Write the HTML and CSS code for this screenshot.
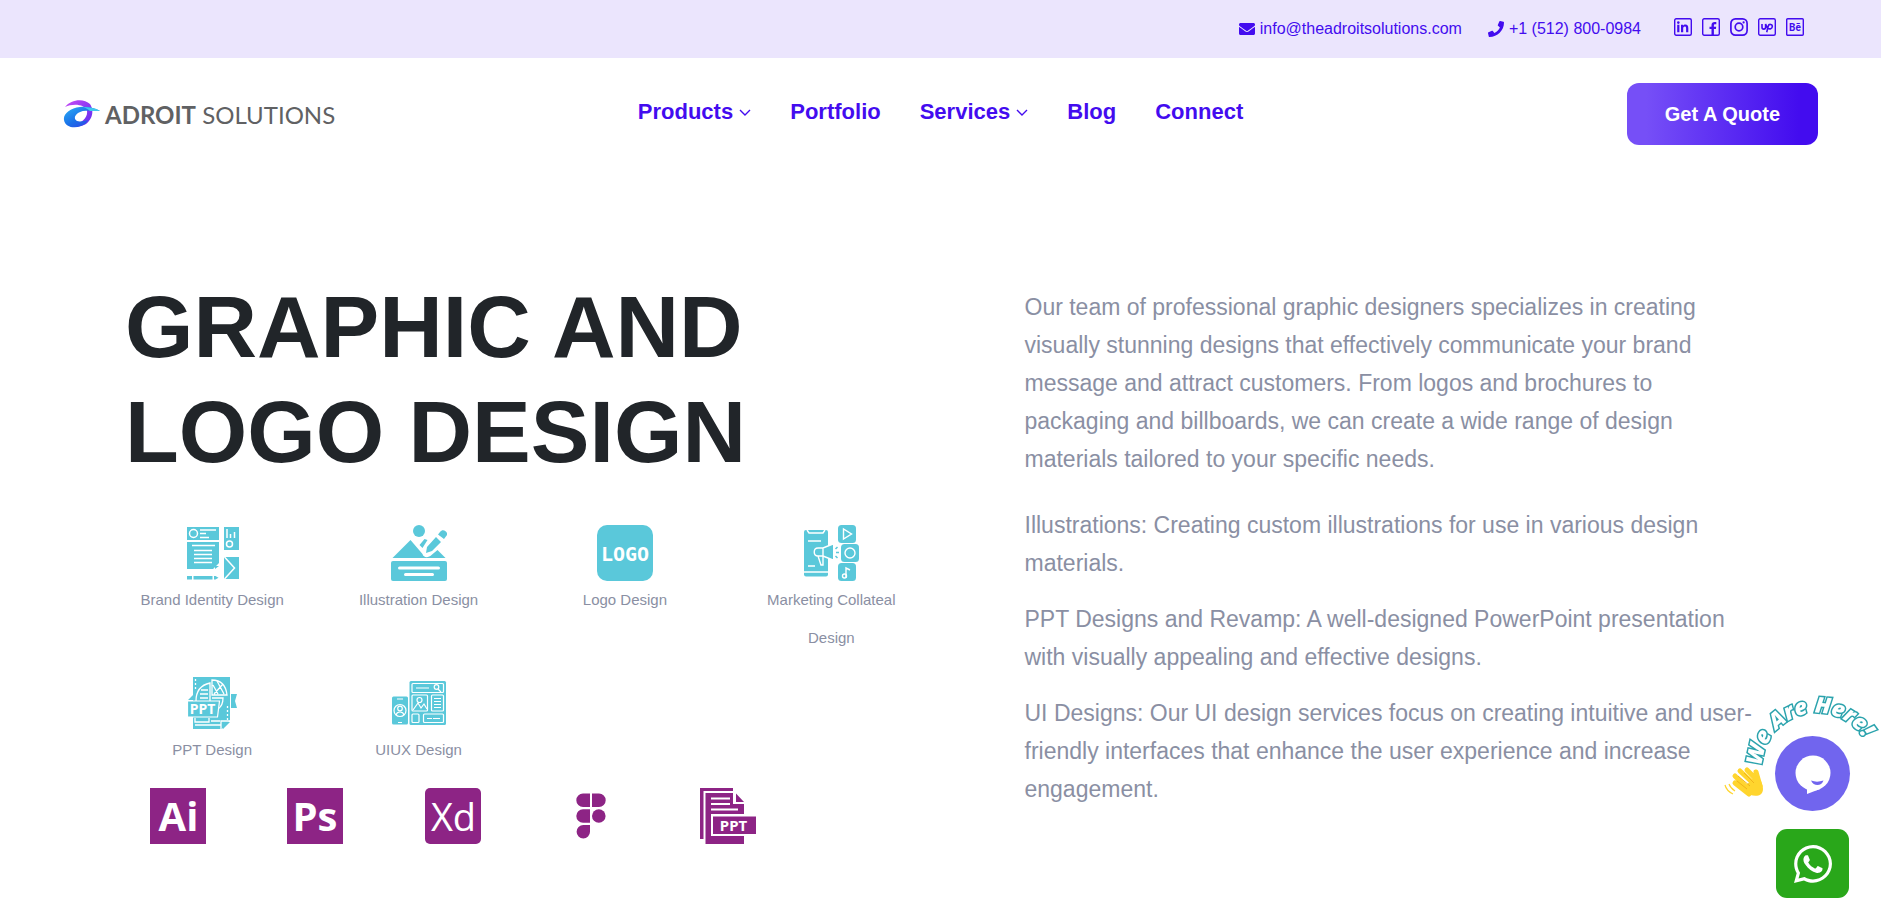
FILE: index.html
```html
<!DOCTYPE html>
<html lang="en">
<head>
    <meta charset="UTF-8">
    <meta name="viewport" content="width=device-width, initial-scale=1">
    <title>Graphic and Logo Design | Adroit Solutions</title>
    <link rel="stylesheet" href="styles.css">
</head>
<body>
    <!-- top bar -->
    <div class="topbar">
        <a class="contact" href="mailto:info@theadroitsolutions.com">
            <svg width="16" height="16" viewBox="0 0 512 512" fill="currentColor"><path d="M502.3 190.8c3.9-3.1 9.7-.2 9.7 4.7V400c0 26.5-21.5 48-48 48H48c-26.5 0-48-21.5-48-48V195.6c0-5 5.7-7.8 9.7-4.7 22.4 17.4 52.1 39.5 154.1 113.6 21.1 15.4 56.7 47.8 92.2 47.6 35.7.3 72-32.8 92.3-47.6 102-74.1 131.6-96.3 154-113.7zM256 320c23.2.4 56.6-29.2 73.4-41.4 132.7-96.3 142.8-104.7 173.4-128.7 5.8-4.5 9.2-11.5 9.2-18.9v-19c0-26.5-21.5-48-48-48H48c-26.5 0-48 21.5-48 48v19c0 7.4 3.4 14.3 9.2 18.9 30.6 23.9 40.7 32.4 173.4 128.7 16.8 12.2 50.2 41.8 73.4 41.4z"/></svg>
            info@theadroitsolutions.com
        </a>
        <a class="contact" href="tel:+15128000984">
            <svg width="16" height="16" viewBox="0 0 512 512" fill="currentColor"><path d="M493.4 24.6l-104-24c-11.3-2.6-22.9 3.3-27.5 13.9l-48 112c-4.2 9.8-1.4 21.3 6.9 28l60.6 49.6c-36 76.7-98.9 140.5-177.2 177.2l-49.6-60.6c-6.8-8.3-18.2-11.1-28-6.9l-112 48C3.9 366.5-2 378.1.6 389.4l24 104C27.1 504.2 36.7 512 48 512c256.1 0 464-207.5 464-464 0-11.2-7.7-20.9-18.6-23.4z"/></svg>
            +1 (512) 800-0984
        </a>
        <div class="social">
            <a href="#" aria-label="LinkedIn">
                <svg width="18" height="18" viewBox="0 0 18 18"><rect x="0.7" y="0.7" width="16.6" height="16.6" rx="1.5" fill="none" stroke="currentColor" stroke-width="1.4"/><g fill="currentColor"><circle cx="4.3" cy="4.6" r="1.3"/><path d="M3.2 6.8h2.200v7.4H3.200zM7 6.800h2.100v1c.5-.8 1.200-1.200 2.300-1.200 2.100 0 2.900 1.300 2.900 3.400v4.200h-2.200v-3.900c0-1.200-.4-1.800-1.300-1.800-1.100 0-1.600.8-1.600 1.900v3.800H7z"/></g></svg>
            </a>
            <a href="#" aria-label="Facebook">
                <svg width="18" height="18" viewBox="0 0 18 18"><rect x="0.7" y="0.7" width="16.6" height="16.6" rx="1.5" fill="none" stroke="currentColor" stroke-width="1.4"/><path d="M9.500 17V11H7.500V8.800h2V7.200c0-2 1.200-3.200 3.100-3.200h1.700v2.200h-1.200c-.9 0-1.200.4-1.200 1.200v1.400h2.300L13.900 11h-2v6z" fill="currentColor"/></svg>
            </a>
            <a href="#" aria-label="Instagram">
                <svg width="18" height="18" viewBox="0 0 18 18"><rect x="0.9" y="0.9" width="16.200" height="16.200" rx="4.500" fill="none" stroke="currentColor" stroke-width="1.700"/><circle cx="9" cy="9" r="3.800" fill="none" stroke="currentColor" stroke-width="1.700"/><circle cx="13.600" cy="4.400" r="1.100" fill="currentColor"/></svg>
            </a>
            <a href="#" aria-label="Upwork">
                <svg width="18" height="18" viewBox="0 0 18 18"><rect x="0.7" y="0.7" width="16.6" height="16.6" rx="1.500" fill="none" stroke="currentColor" stroke-width="1.4"/><path d="M4 6v3.200c0 2.600 3.600 2.600 3.600 0V6c.6 2.200 1.500 3.700 2.700 4.800M8.700 14.200l1.500-6c.6-2.600 4.200-2.200 4.100.3-.1 2.400-2.600 2.900-4.200 1.900" fill="none" stroke="currentColor" stroke-width="1.600"/></svg>
            </a>
            <a href="#" aria-label="Behance">
                <svg width="18" height="18" viewBox="0 0 18 18"><rect x="0.7" y="0.7" width="16.6" height="16.6" rx="1" fill="none" stroke="currentColor" stroke-width="1.4"/><text x="9" y="12.500" text-anchor="middle" class="be">Bē</text></svg>
            </a>
        </div>
    </div>

    <!-- header -->
    <header class="header">
        <a class="logo" href="#">
            <svg width="38" height="28" viewBox="0 0 38 28">
                <defs>
                    <linearGradient id="markPurple" x1="0" y1="0" x2="1" y2="1"><stop offset="0" stop-color="#c94bf5"/><stop offset="1" stop-color="#5a2af0"/></linearGradient>
                    <linearGradient id="markBlue" x1="0" y1="0" x2="1" y2="1"><stop offset="0" stop-color="#2bb0f5"/><stop offset="0.500" stop-color="#1a6fe8"/><stop offset="1" stop-color="#3a2fe8"/></linearGradient>
                </defs>
                <path d="M2 7C8-1 21-2 27 4c4 6 3 15-4 20-5 3-10 3-13 1 9-1 15-8 14-14C22 4 10 3 2 7z" fill="url(#markPurple)"/>
                <path d="M37 11c-5-3-13-5-20-4C7 8 0 14 1 20c1 7 10 9 17 6 3-1 6-3 7-6-4 1-8 2-11 1-3-2-3-5 1-8 4-3 11-3 22-2z" fill="url(#markBlue)"/>
                <path d="M37 11c-4-3-11-4-17-4 3 1 5 2 7 4z" fill="#40c8ee"/>
            </svg>
            <span class="logo-text"><b>ADROIT</b> SOLUTIONS</span>
        </a>
        <nav class="nav">
            <a href="#">Products <svg width="12" height="8" viewBox="0 0 12 8"><path d="M1 1l5 5 5-5"/></svg></a>
            <a href="#">Portfolio</a>
            <a href="#">Services <svg width="12" height="8" viewBox="0 0 12 8"><path d="M1 1l5 5 5-5"/></svg></a>
            <a href="#">Blog</a>
            <a href="#">Connect</a>
        </nav>
        <button class="quote" type="button">Get A Quote</button>
    </header>

    <!-- service section -->
    <main class="service">
        <section class="service-left">
            <h1>GRAPHIC AND LOGO DESIGN</h1>
            <div class="types">
                <div class="type">
                    <svg width="56" height="56" viewBox="0 0 56 56">
                        <path fill="#5ac8da" d="M3 2h32v13H3zM3 17h32v21l-6 6H3zM40 2h15v23H40zM40 32h15v22H40zM3 51h5v3.500H3zM9.500 51h19v3.500h-19zM30 51h1.500l3 1.700-3 1.800H30zM31 44v-3h4z"/>
                        <g fill="none" stroke="#fff" stroke-width="1.500">
                            <circle cx="9.500" cy="8.500" r="4"/><circle cx="45.500" cy="19" r="3"/>
                            <path d="M16 5h16M16 8.500h6M16 12.500h9M8 20.500h23M10 25.500h18M10 29.500h18M10 33.500h18M10 37.500h18M43 4v9M46.500 9v4M50.500 7v6M40.500 32l10 11-10 11"/>
                        </g>
                    </svg>
                    <p>Brand Identity Design</p>
                </div>
                <div class="type">
                    <svg width="56" height="56" viewBox="0 0 56 56">
                        <g fill="#5ac8da">
                            <circle cx="28" cy="6" r="6"/>
                            <path d="M1.500 33l18-18 12 14c1 4 6 4 9 1l6-5 8 8z"/>
                            <path d="M36 22l9-10 5 5-9 9-6 2zM47 9.500l2-2.500c3-4 8 0 7 3l-3 4zM28.500 20l5-6 3 1-5 8z"/>
                            <rect y="36" width="56" height="20" rx="2"/>
                        </g>
                        <path d="M8.500 43h39M14.500 49.500h27" stroke="#fff" stroke-width="3" stroke-linecap="round"/>
                    </svg>
                    <p>Illustration Design</p>
                </div>
                <div class="type">
                    <svg width="56" height="56" viewBox="0 0 56 56">
                        <rect width="56" height="56" rx="10" fill="#5ac8da"/>
                        <text x="28" y="36" text-anchor="middle" class="logo-word">LOGO</text>
                    </svg>
                    <p>Logo Design</p>
                </div>
                <div class="type">
                    <svg width="56" height="56" viewBox="0 0 56 56">
                        <g fill="#5ac8da">
                            <rect x="1" y="5" width="24" height="46.500" rx="2"/>
                            <path d="M20 23l10-4v16l-10-4z"/>
                            <rect x="35" width="18" height="18" rx="3.500"/>
                            <rect x="38" y="19" width="18" height="18" rx="3.500"/>
                            <rect x="35" y="38" width="18" height="18" rx="3.500"/>
                        </g>
                        <g fill="none" stroke="#fff" stroke-width="1.400">
                            <path d="M4 5l2 3h14l2-3M5 16h13M5 41h7M1 47h24M30 19l-10 4h-5c-5 0-5 8 0 8h5l10 4M20 23v17h-2l-3-9M40.500 4v10l8-5zM43 53V43l4 2"/>
                            <circle cx="47" cy="28" r="5"/><circle cx="41.500" cy="51" r="2"/>
                        </g>
                        <path d="M32.500 24l2-2M33 27.500h3M32.500 31l2 2" stroke="#5ac8da" stroke-width="1.500"/>
                    </svg>
                    <p>Marketing Collateal Design</p>
                </div>
                <div class="type">
                    <svg width="56" height="56" viewBox="0 0 56 56">
                        <path fill="#5ac8da" d="M9 2h37v43l-8 9H9zM4 25l5-5v5zM47 19h6l-2 7 2 7h-6zM39 54v-7h7z"/>
                        <g fill="none" stroke="#fff" stroke-width="1.300">
                            <path d="M12 26c0-10 5-16 14-18v19M28 5c9 0 14 6 15 15H28zM29 10l5 9M33 6l7 13M39 9l-9 10M17 15h7M16 19h8M16 23h8M28 23h11c0 5-2 9-5 11M11 43v4h14v-4M11 50h26M27 46h9M37 54v-8h9"/>
                            <path d="M11.500 4v10M43.500 31v14" stroke-dasharray="2 2"/>
                        </g>
                        <path d="M3.500 26h32l-2 16h-30z" fill="#5ac8da" stroke="#fff" stroke-width="1.200"/>
                        <text x="18.500" y="39" text-anchor="middle" class="ppt-teal">PPT</text>
                    </svg>
                    <p>PPT Design</p>
                </div>
                <div class="type">
                    <svg width="56" height="56" viewBox="0 0 56 56">
                        <g fill="#5ac8da"><rect x="1" y="21.500" width="16" height="28" rx="1.500"/><rect x="18.500" y="6" width="36.500" height="44" rx="1.500"/></g>
                        <g fill="none" stroke="#fff" stroke-width="1.200">
                            <circle cx="9" cy="35.500" r="6"/><circle cx="9" cy="33.500" r="2.300"/><path d="M5 40c1-4 7-4 8 0M6 24h6M7 47.500h4"/>
                            <rect x="21" y="8.500" width="31.500" height="9" rx="1"/><path d="M25 13h13M47 14l3 3"/><circle cx="45.500" cy="12" r="2.300"/>
                            <rect x="21" y="20" width="15.500" height="16" rx="1"/><circle cx="28.500" cy="25" r="2.500"/><path d="M22 35l5-7 3 5 3-4 3 5"/>
                            <rect x="40.500" y="20" width="12" height="16" rx="1"/><path d="M43 23.500h7M43 26.500h7M43 29.500h7M43 32.500h7"/>
                            <rect x="21" y="39" width="7" height="8.500" rx="1"/><rect x="32.500" y="39" width="20" height="8.500" rx="1"/><path d="M36 43.500h5M42 43.500h7"/>
                        </g>
                    </svg>
                    <p>UIUX Design</p>
                </div>
            </div>
            <div class="tools">
                <svg width="56" height="56" viewBox="0 0 56 56"><rect width="56" height="56" fill="#8d2485"/><text x="28.500" y="43" text-anchor="middle" class="adobe">Ai</text></svg>
                <svg width="56" height="56" viewBox="0 0 56 56"><rect width="56" height="56" fill="#8d2485"/><text x="28" y="43" text-anchor="middle" class="adobe">Ps</text></svg>
                <svg width="56" height="56" viewBox="0 0 56 56"><rect width="56" height="56" rx="5" fill="#8d2485"/><text x="28.500" y="42.500" text-anchor="middle" class="adobe thin">Xd</text></svg>
                <svg width="56" height="56" viewBox="0 0 56 56"><path fill="#8d2485" d="M27 5.500h-7a6.700 6.700 0 0 0 0 13.400h7zM29 5.500h7a6.700 6.700 0 0 1 0 13.400h-7zM27 21.300h-7a6.700 6.700 0 0 0 0 13.400h7zM27 37h-6.700a6.700 6.700 0 1 0 6.700 6.700z"/><circle cx="35.800" cy="28" r="6.800" fill="#8d2485"/></svg>
                <svg width="56" height="56" viewBox="0 0 56 56">
                    <path fill="#8d2485" d="M0 0h33v3H3.500v48H0zM5.500 5H33v11h11v10H11v22h33v8H5.500zM36 5.500l8 8.500h-8zM13 28.500h43V46H13z"/>
                    <path d="M11 10.500h19M11 16h19M11 21.500h27" stroke="#fff" stroke-width="2"/>
                    <text x="33.500" y="43" text-anchor="middle" class="ppt-purple">PPT</text>
                </svg>
            </div>
        </section>

        <section class="service-right">
            <p class="intro">Our team of professional graphic designers specializes in creating visually stunning designs that effectively communicate your brand message and attract customers. From logos and brochures to packaging and billboards, we can create a wide range of design materials tailored to your specific needs.</p>
            <p>Illustrations: Creating custom illustrations for use in various design materials.</p>
            <p>PPT Designs and Revamp: A well-designed PowerPoint presentation with visually appealing and effective designs.</p>
            <p>UI Designs: Our UI design services focus on creating intuitive and user-friendly interfaces that enhance the user experience and increase engagement.</p>
        </section>
    </main>

    <!-- floating chat buttons -->
    <div class="floating">
        <button class="chat" type="button" aria-label="Open chat">
            <svg width="75" height="75" viewBox="0 0 75 75"><circle cx="38" cy="37" r="17.500" fill="#fff"/><path d="M32 50v8l13-5z" fill="#fff"/><path d="M36 44.500c4 1.500 8 1.500 12.500 0-2 6-10 6-12.500 0z" fill="#7165ee"/></svg>
        </button>
        <svg class="greeting" width="160" height="124" viewBox="0 0 160 124">
            <defs><path id="arc" d="M41 76A55 55 0 1 1 150 88"/></defs>
            <text class="greeting-text"><textPath href="#arc">We Are Here!</textPath></text>
            <g fill="none" stroke="#ffd52e" stroke-width="5" stroke-linecap="round">
                <path d="M14 86l14 14M19 81l14 13M26 80l12 12M14 93l14 11M39 96l-4-14"/>
            </g>
            <path d="M22 98l14-13c4 5 6 10 6 14 0 8-10 9-18 3z" fill="#ffd52e"/>
            <path d="M17 86l12 10M23 83l10 10M16 91l10 8" fill="none" stroke="#f0b41c" stroke-width="1"/>
            <path d="M4 95c1 4 4 7 8 9M8 94c1 3 3 5 6 7" fill="none" stroke="#ffd52e" stroke-width="1.200"/>
        </svg>
        <a class="whatsapp" href="#" aria-label="WhatsApp">
            <svg width="38" height="38" viewBox="0 32 448 448" fill="#fff"><path d="M380.900 97.100C339 55.100 283.200 32 223.900 32c-122.400 0-222 99.600-222 222 0 39.100 10.200 77.300 29.600 111L0 480l117.700-30.900c32.400 17.700 68.900 27 106.100 27h.1c122.300 0 224.100-99.600 224.100-222 0-59.300-25.200-115-67.100-157zm-157 341.600c-33.200 0-65.700-8.900-94-25.700l-6.700-4-69.800 18.300L72 359.200l-4.400-7c-18.500-29.400-28.200-63.300-28.200-98.200 0-101.700 82.800-184.500 184.600-184.500 49.300 0 95.600 19.200 130.400 54.100 34.800 34.900 56.200 81.200 56.100 130.500 0 101.800-84.900 184.600-186.600 184.600zm101.200-138.200c-5.500-2.800-32.800-16.200-37.900-18-5.100-1.900-8.800-2.800-12.500 2.800-3.700 5.600-14.300 18-17.600 21.800-3.200 3.700-6.500 4.200-12 1.400-32.600-16.300-54-29.100-75.500-66-5.700-9.800 5.700-9.100 16.300-30.300 1.800-3.700.9-6.900-.5-9.700-1.400-2.800-12.500-30.100-17.100-41.200-4.500-10.800-9.100-9.300-12.500-9.500-3.200-.2-6.900-.2-10.600-.2-3.700 0-9.700 1.400-14.800 6.900-5.100 5.600-19.400 19-19.400 46.300 0 27.300 19.900 53.700 22.600 57.400 2.800 3.700 39.100 59.700 94.800 83.800 35.200 15.200 49 16.500 66.600 13.900 10.700-1.600 32.800-13.400 37.400-26.400 4.600-13 4.600-24.100 3.200-26.400-1.300-2.500-5-3.900-10.500-6.600z"/></svg>
        </a>
    </div>
</body>
</html>
```
FILE: styles.css
```css
* {
    box-sizing: border-box;
}

body {
    margin: 0;
    background: #fff;
    font-family: "Liberation Sans", Arial, sans-serif;
    color: #212529;
}

a {
    color: #430cef;
    text-decoration: none;
}

h1, p {
    margin: 0;
}

/* Top bar */
.topbar {
    display: flex;
    justify-content: flex-end;
    align-items: center;
    height: 58px;
    padding: 0 77px;
    background: #ebe5fd;
    font-size: 16px;
}

.contact {
    display: flex;
    align-items: center;
    gap: 5px;
    margin-right: 26px;
}

.social {
    display: flex;
    gap: 10px;
    margin-left: 7px;
    padding-bottom: 4px;
}

.social svg {
    display: block;
}

.be {
    font: bold 10px Roboto, sans-serif;
    fill: #430cef;
}

/* Header */
.header {
    display: grid;
    grid-template-columns: 1fr auto 1fr;
    align-items: center;
    padding: 25px 63px;
}

.logo {
    display: flex;
    align-items: center;
    gap: 4px;
}

.logo-text {
    font-family: Lato, sans-serif;
    font-size: 24px;
    font-weight: 400;
    color: #606163;
}

.logo-text b {
    font-weight: 700;
}

.nav {
    display: flex;
    gap: 39px;
    padding-bottom: 4px;
    font-size: 22px;
    font-weight: bold;
}

.nav svg {
    fill: none;
    stroke: #430cef;
    stroke-width: 1.4;
    vertical-align: middle;
}

.quote {
    justify-self: end;
    height: 62px;
    padding: 0 38px;
    border: none;
    border-radius: 12px;
    background: linear-gradient(90deg, #764ff7 10%, #430cef 90%);
    color: #fff;
    font: bold 20px "Liberation Sans", Arial, sans-serif;
    cursor: pointer;
}

/* Service section */
.service {
    display: grid;
    grid-template-columns: 1fr 1fr;
    padding: 104px 109px 70px;
}

.service-left {
    padding-right: 6px;
}

h1 {
    padding: 0 160px 0 16px;
    font-size: 88px;
    line-height: 105px;
}

.types {
    display: grid;
    grid-template-columns: repeat(4, 1fr);
    row-gap: 18px;
    margin-top: 41px;
}

.type {
    padding: 0 30px;
    text-align: center;
    font-size: 15px;
    line-height: 38px;
    color: #8a8fa3;
}

.type:first-child {
    padding: 0 12px;
}

.type svg {
    display: block;
    margin: 0 auto;
}

.tools {
    display: grid;
    grid-template-columns: repeat(6, 1fr);
    justify-items: center;
    margin-top: 19px;
}

.logo-word {
    font: bold 20px "DejaVu Sans Mono", monospace;
    fill: #fff;
}

.ppt-teal {
    font: bold 14px "Noto Sans", sans-serif;
    fill: #fff;
}

.ppt-purple {
    font: bold 15px "Noto Sans", sans-serif;
    fill: #fff;
}

.adobe {
    font: bold 40px "Open Sans", sans-serif;
    fill: #fff;
}

.adobe.thin {
    font-weight: 400;
    font-size: 38px;
}

.service-right {
    padding: 14px 16px 0 84px;
    font-size: 23px;
    line-height: 38px;
    color: #8a8fa3;
}

.service-right p + p {
    margin-top: 18px;
}

.service-right .intro + p {
    margin-top: 28px;
}

/* Floating buttons */
.floating {
    position: fixed;
    right: 31px;
    bottom: 20px;
    display: flex;
    flex-direction: column;
    align-items: center;
    gap: 18px;
}

.chat {
    width: 75px;
    height: 75px;
    padding: 0;
    border: none;
    border-radius: 50%;
    background: #7165ee;
    cursor: pointer;
}

.chat svg {
    display: block;
}

.greeting {
    position: absolute;
    right: -31px;
    top: -46px;
    pointer-events: none;
}

.greeting-text {
    font: italic 800 22px "Open Sans", sans-serif;
    fill: #fff;
    stroke: #2ba3ad;
    stroke-width: 3px;
    paint-order: stroke;
}

.whatsapp {
    display: flex;
    justify-content: center;
    align-items: center;
    width: 73px;
    height: 69px;
    border-radius: 11px;
    background: #29a71a;
}
```
